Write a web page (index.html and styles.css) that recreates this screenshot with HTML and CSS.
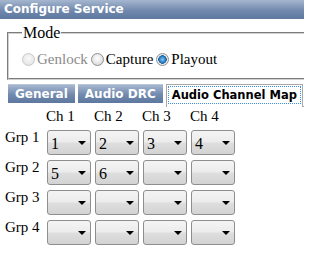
FILE: index.html
```html
<!DOCTYPE html>
<html>
<head>
<meta charset="utf-8">
<title>Configure Service</title>
<link rel="stylesheet" href="styles.css">
</head>
<body>
<div class="titlebar">Configure Service</div>
<fieldset class="mode">
  <legend>Mode</legend>
  <div class="radios">
    <span class="radio disabled"></span><span class="rlabel disabled">Genlock</span>
    <span class="radio"></span><span class="rlabel">Capture</span>
    <span class="radio checked"></span><span class="rlabel">Playout</span>
  </div>
</fieldset>
<div class="tabs">
  <div class="tab">General</div>
  <div class="tab">Audio DRC</div>
  <div class="tab active"><span class="focus">Audio Channel Map</span></div>
  <div class="tabfill"></div>
</div>
<div class="map">
  <div></div>
  <div class="ch">Ch 1</div>
  <div class="ch">Ch 2</div>
  <div class="ch">Ch 3</div>
  <div class="ch">Ch 4</div>

  <div class="grp">Grp 1</div>
  <div class="sel"><span class="val">1</span><span class="arrow"></span></div>
  <div class="sel"><span class="val">2</span><span class="arrow"></span></div>
  <div class="sel"><span class="val">3</span><span class="arrow"></span></div>
  <div class="sel"><span class="val">4</span><span class="arrow"></span></div>

  <div class="grp">Grp 2</div>
  <div class="sel"><span class="val">5</span><span class="arrow"></span></div>
  <div class="sel"><span class="val">6</span><span class="arrow"></span></div>
  <div class="sel"><span class="val"></span><span class="arrow"></span></div>
  <div class="sel"><span class="val"></span><span class="arrow"></span></div>

  <div class="grp">Grp 3</div>
  <div class="sel"><span class="val"></span><span class="arrow"></span></div>
  <div class="sel"><span class="val"></span><span class="arrow"></span></div>
  <div class="sel"><span class="val"></span><span class="arrow"></span></div>
  <div class="sel"><span class="val"></span><span class="arrow"></span></div>

  <div class="grp">Grp 4</div>
  <div class="sel"><span class="val"></span><span class="arrow"></span></div>
  <div class="sel"><span class="val"></span><span class="arrow"></span></div>
  <div class="sel"><span class="val"></span><span class="arrow"></span></div>
  <div class="sel"><span class="val"></span><span class="arrow"></span></div>
</div>
</body>
</html>
```

FILE: styles.css
```css
html, body {
  margin: 0;
  padding: 0;
  background: #fff;
  overflow: hidden;
}
body {
  font-family: "Liberation Serif", "Times New Roman", serif;
  font-size: 15px;
  color: #000;
  width: 304px;
}
.titlebar {
  height: 19px;
  line-height: 19px;
  padding-left: 4px;
  background: linear-gradient(#a5b6cf, #7189ae 55%, #5d779e);
  color: #fff;
  font-family: "DejaVu Sans", Verdana, sans-serif;
  font-weight: bold;
  font-size: 12px;
}
.mode {
  margin: 5px 0 0 7px;
  width: 320px;
  padding: 0 0 8px 10px;
  border: 2px groove #d0d0d0;
  border-right: none;
  box-sizing: border-box;
}
.mode legend {
  font-size: 16px;
  padding: 0 1px;
  margin-left: 3px;
  line-height: 18px;
}
.radios {
  display: flex;
  align-items: center;
  height: 22px;
  padding-top: 6px;
}
.radio {
  width: 13px;
  height: 13px;
  box-sizing: border-box;
  border-radius: 50%;
  border: 1px solid #8f8f8f;
  background: radial-gradient(circle at 50% 40%, #ffffff, #dcdcdc 75%);
  margin: 0 2px 0 3px;
  flex: none;
}
.radio.disabled {
  border-color: #c8c8c8;
  background: radial-gradient(circle at 50% 40%, #f8f8f8, #e6e6e6 75%);
}
.radio.checked {
  background: radial-gradient(circle, #86c6f0 0, #2a7fc4 3px, #1b5f9a 4px, #e6e6e6 4.5px, #f4f4f4 6px);
}
.rlabel {
  line-height: 18px;
}
.rlabel.disabled {
  color: #8a8a8a;
}
.tabs {
  display: flex;
  align-items: flex-start;
  margin: 4px 0 0 8px;
  height: 23px;
}
.tab {
  flex: none;
  white-space: nowrap;
  height: 19px;
  line-height: 19px;
  padding: 0 7px;
  margin-right: 3px;
  background: linear-gradient(#a5b6cf, #7189ae 55%, #5d779e);
  color: #fff;
  font-family: "DejaVu Sans", Verdana, sans-serif;
  font-weight: bold;
  font-size: 12px;
  border-top: 1px solid #b9c6da;
  box-sizing: border-box;
}
.tab.active {
  height: 23px;
  background: #fff;
  color: #000;
  border: 1px solid #a9a9a9;
  border-bottom: none;
  padding: 2px 2px 0 2px;
  line-height: 16px;
  margin-right: 0;
  font-size: 11.5px;
}
.focus {
  display: block;
  padding: 0 3px;
  outline: 1px dotted #3d8ee0;
  outline-offset: 0;
}
.tabfill {
  flex: 1;
  height: 23px;
  border-bottom: 1px solid #a9a9a9;
  box-sizing: border-box;
}
.map {
  display: grid;
  grid-template-columns: 38px repeat(4, 44px);
  column-gap: 4px;
  row-gap: 5px;
  grid-template-rows: 17px repeat(4, 25px);
  margin: 1px 0 0 5px;
}
.ch {
  line-height: 17px;
  margin-left: -1px;
}
.grp {
  line-height: 17px;
  margin-top: -1px;
  white-space: nowrap;
}
.sel {
  display: flex;
  align-items: center;
  justify-content: space-between;
  border: 1px solid #8e8e8e;
  border-radius: 3px;
  box-sizing: border-box;
  height: 25px;
  padding: 2px 4px 0 3px;
  background: linear-gradient(#f4f4f4, #ececec 48%, #dedede 52%, #d3d3d3);
}
.val {
  font-size: 16px;
}
.arrow {
  width: 0;
  height: 0;
  border-left: 4px solid transparent;
  border-right: 4px solid transparent;
  border-top: 4px solid #000;
  margin-top: -2px;
}
```
